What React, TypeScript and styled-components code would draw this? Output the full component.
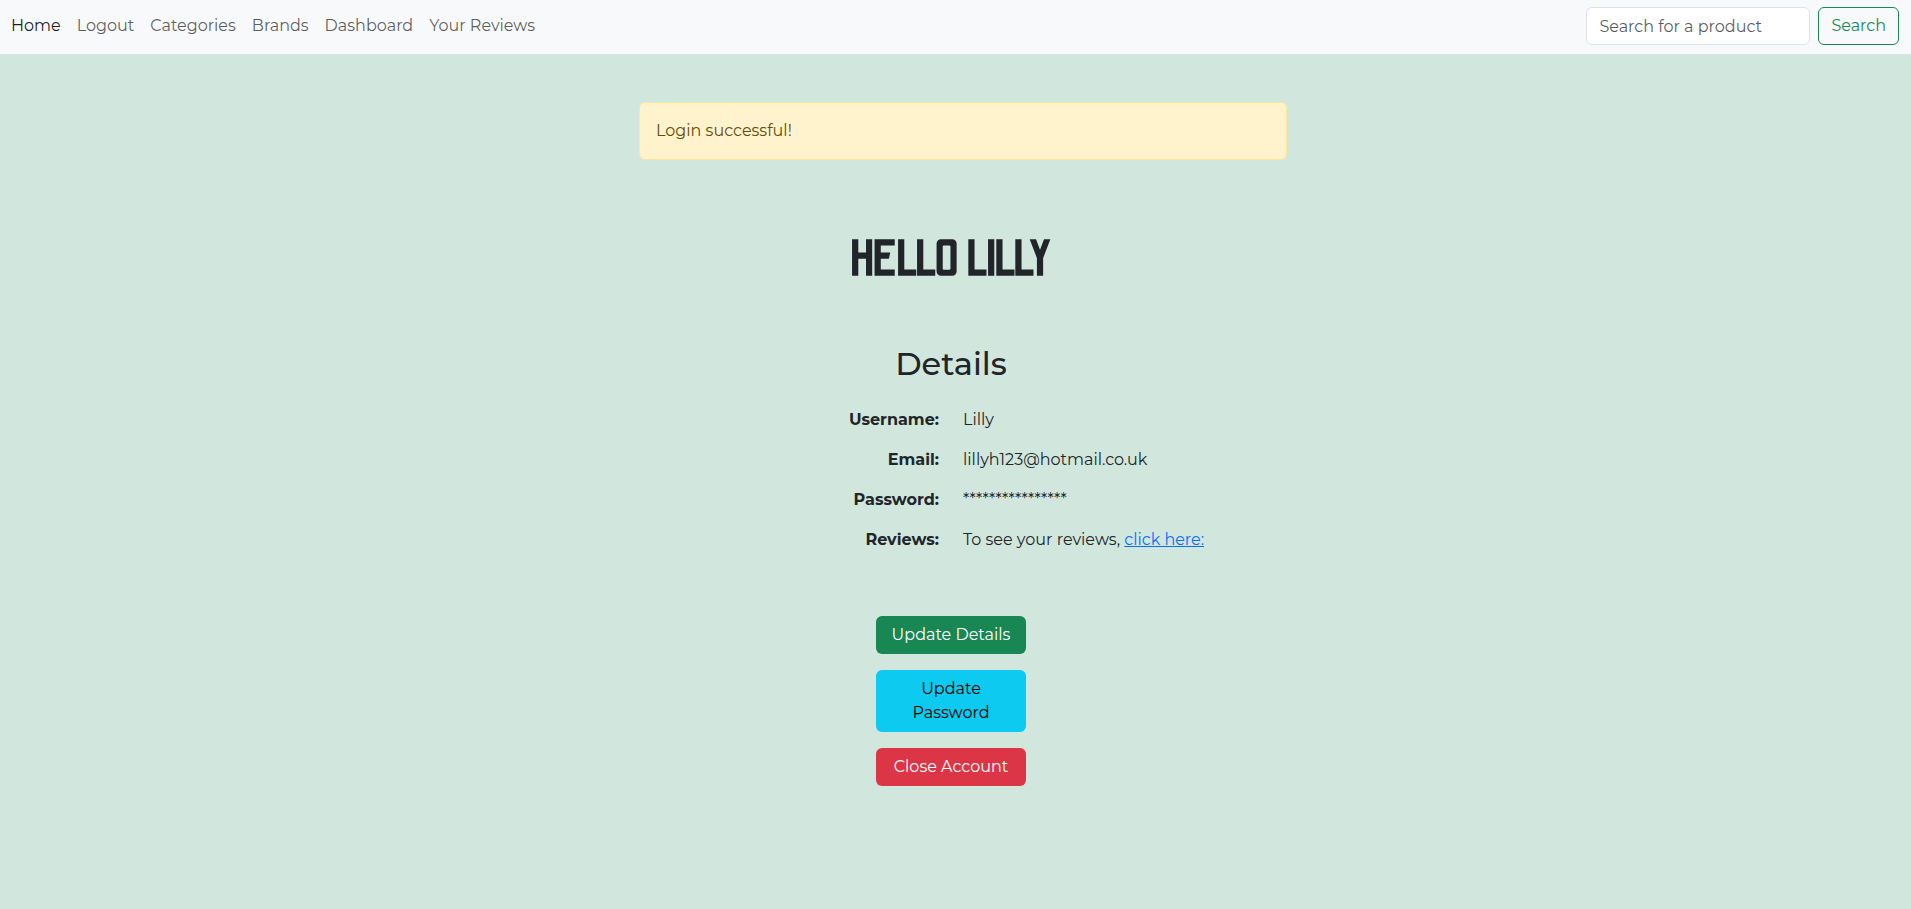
import React from "react";
import styled, { createGlobalStyle, css } from "styled-components";

const GlobalStyle = createGlobalStyle`
  *, *::before, *::after { box-sizing: border-box; }
  body {
    margin: 0;
    min-height: 100vh;
    background: #d1e7dd;
    color: #212529;
    font-family: Montserrat, Inter, "Liberation Sans", sans-serif;
    font-size: 16px;
    font-weight: 400;
    line-height: 24px;
  }
`;

const Navbar = styled.nav`
  display: flex;
  align-items: flex-start;
  justify-content: space-between;
  padding: 7px 12px 9px 11px;
  background: #f8f9fa;
`;

const NavList = styled.ul`
  display: flex;
  gap: 16px;
  margin: 0;
  padding: 7px 0;
  list-style: none;
`;

const NavLink = styled.a<{ $active?: boolean }>`
  display: block;
  color: ${(p) => (p.$active ? "rgba(0, 0, 0, 0.9)" : "rgba(0, 0, 0, 0.65)")};
  text-decoration: none;
`;

const SearchForm = styled.form`
  display: flex;
  gap: 8px;
`;

const controlStyles = css`
  height: 38px;
  padding: 6px 12px;
  border: 1px solid transparent;
  border-radius: 6px;
  font: inherit;
`;

const SearchInput = styled.input`
  ${controlStyles}
  width: 224px;
  border-color: #dee2e6;
  background: #fff;
  color: #212529;

  &::placeholder {
    color: rgba(33, 37, 41, 0.75);
    opacity: 1;
  }
`;

const SearchButton = styled.button`
  ${controlStyles}
  border-color: #198754;
  background: transparent;
  color: #198754;
  cursor: pointer;
`;

const Main = styled.main`
  display: flex;
  flex-direction: column;
  align-items: center;
  padding: 48px 9px 48px 0;
`;

const Alert = styled.div`
  width: 100%;
  max-width: 648px;
  margin-left: 24px;
  padding: 16px;
  border: 1px solid #ffe69c;
  border-radius: 6px;
  background: #fff3cd;
  color: #664d03;
`;

const Greeting = styled.h1`
  margin: 72px 0 56px;
  font-family: "Odibee Sans", "Bebas Neue", Oswald, sans-serif;
  font-size: 50px;
  font-weight: 700;
  line-height: 56px;
  text-transform: uppercase;
`;

const SectionTitle = styled.h2`
  margin: 0 0 24px;
  font-size: 32px;
  font-weight: 500;
  line-height: 40px;
`;

const DetailList = styled.dl`
  display: grid;
  grid-template-columns: 1fr 1fr;
  gap: 16px 24px;
  width: 100%;
  margin: 0 0 64px;
`;

const Term = styled.dt`
  font-weight: 700;
  text-align: right;
`;

const Value = styled.dd`
  margin: 0;
`;

const TextLink = styled.a`
  color: #0d6efd;
`;

const Actions = styled.div`
  display: flex;
  flex-direction: column;
  gap: 16px;
  width: 150px;
`;

const ActionButton = styled.button<{ $bg: string; $color?: string }>`
  padding: 7px 12px;
  border: 0;
  border-radius: 6px;
  background: ${(p) => p.$bg};
  color: ${(p) => p.$color ?? "#fff"};
  font: inherit;
  cursor: pointer;
`;

const links = ["Home", "Logout", "Categories", "Brands", "Dashboard", "Your Reviews"];

export default function App() {
  return (
    <>
      <GlobalStyle />
      <Navbar aria-label="Main">
        <NavList>
          {links.map((label, i) => (
            <li key={label}>
              <NavLink href="#" $active={i === 0}>{label}</NavLink>
            </li>
          ))}
        </NavList>
        <SearchForm role="search" onSubmit={(e) => e.preventDefault()}>
          <SearchInput type="search" placeholder="Search for a product" aria-label="Search for a product" />
          <SearchButton type="submit">Search</SearchButton>
        </SearchForm>
      </Navbar>
      <Main>
        <Alert role="alert">Login successful!</Alert>
        <Greeting>Hello Lilly</Greeting>
        <SectionTitle>Details</SectionTitle>
        <DetailList>
          <Term>Username:</Term>
          <Value>Lilly</Value>
          <Term>Email:</Term>
          <Value>lillyh123@hotmail.co.uk</Value>
          <Term>Password:</Term>
          <Value>****************</Value>
          <Term>Reviews:</Term>
          <Value>
            To see your reviews, <TextLink href="#">click here:</TextLink>
          </Value>
        </DetailList>
        <Actions>
          <ActionButton type="button" $bg="#198754">Update Details</ActionButton>
          <ActionButton type="button" $bg="#0dcaf0" $color="#000">Update Password</ActionButton>
          <ActionButton type="button" $bg="#dc3545">Close Account</ActionButton>
        </Actions>
      </Main>
    </>
  );
}
